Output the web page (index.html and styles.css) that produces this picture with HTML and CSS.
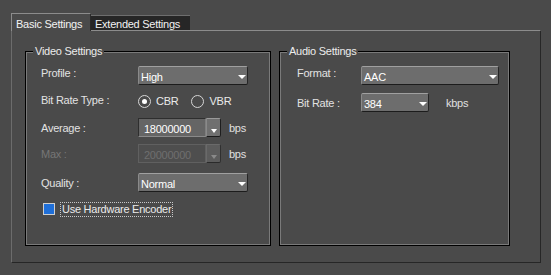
FILE: index.html
```html
<!DOCTYPE html>
<html lang="en">
<head>
    <meta charset="UTF-8">
    <title>Encoder Settings</title>
    <link rel="stylesheet" href="styles.css">
</head>
<body>

<div class="window">
    <div class="tabs">
        <div class="tab tab-active">Basic Settings</div>
        <div class="tab">Extended Settings</div>
    </div>

    <div class="panel">
        <fieldset class="group group-video">
            <legend>Video Settings</legend>
            <div class="rows">
                <div class="row">
                    <span class="label label-top">Profile :</span>
                    <div class="select select-profile"><span class="value">High</span><i class="arrow"></i></div>
                </div>

                <div class="row row-radio">
                    <span class="label">Bit Rate Type :</span>
                    <label class="radio"><i class="dot dot-on"></i>CBR</label>
                    <label class="radio"><i class="dot"></i>VBR</label>
                </div>

                <div class="row">
                    <span class="label label-mid">Average :</span>
                    <div class="combo">
                        <span class="edit">18000000</span>
                        <span class="drop"><i class="arrow"></i></span>
                    </div>
                    <span class="unit">bps</span>
                </div>

                <div class="row row-max">
                    <span class="label label-mid disabled">Max :</span>
                    <div class="combo combo-off">
                        <span class="edit">20000000</span>
                        <span class="drop"><i class="arrow"></i></span>
                    </div>
                    <span class="unit">bps</span>
                </div>

                <div class="row row-quality">
                    <span class="label label-mid">Quality :</span>
                    <div class="select select-profile"><span class="value">Normal</span><i class="arrow"></i></div>
                </div>

                <div class="row row-check">
                    <i class="check"></i>
                    <span class="focus">Use Hardware Encoder</span>
                </div>
            </div>
        </fieldset>

        <fieldset class="group group-audio">
            <legend>Audio Settings</legend>
            <div class="rows">
                <div class="row">
                    <span class="label label-top">Format :</span>
                    <div class="select select-format"><span class="value">AAC</span><i class="arrow"></i></div>
                </div>

                <div class="row row-bitrate">
                    <span class="label label-mid">Bit Rate :</span>
                    <div class="select select-bitrate"><span class="value">384</span><i class="arrow"></i></div>
                    <span class="unit unit-kbps">kbps</span>
                </div>
            </div>
        </fieldset>
    </div>
</div>

</body>
</html>
```

FILE: styles.css
```css
body {
    margin: 0;
    background-color: #4a4a4a;
    font-family: "Liberation Sans", Arial, sans-serif;
    font-size: 11px;
    line-height: 13px;
    letter-spacing: -0.25px;
    color: #e2e2e2;
}

.window {
    padding: 13px 11px 0;
}

/* tabs */
.tabs {
    display: flex;
    align-items: flex-end;
}

.tab {
    box-sizing: border-box;
    height: 15px;
    width: 99px;
    padding: 2px 0 0 4px;
    background-color: #262626;
    border-top: 1px solid #6e6e6e;
    color: #f2f2f2;
}

.tab-active {
    position: relative;
    z-index: 1;
    width: 80px;
    height: 18px;
    margin-bottom: -1px;
    padding: 4px 0 0 4px;
    background-color: #4a4a4a;
    border-top: 1px solid #8c8c8c;
    border-left: 1px solid #8c8c8c;
    border-right: 1px solid #2a2a2a;
}

.panel {
    box-sizing: border-box;
    width: 530px;
    height: 233px;
    display: flex;
    gap: 8px;
    padding: 14px 0 16px 13px;
    border-top: 1px solid #8c8c8c;
    border-left: 1px solid #6c6c6c;
    border-right: 1px solid #262626;
    border-bottom: 1px solid #262626;
}

/* group boxes */
.group {
    box-sizing: border-box;
    margin: 0;
    padding: 0;
    min-width: 0;
    border: 1px solid #000;
    box-shadow: inset 0 0 0 1px #7a7a7a;
}

.group legend {
    margin-left: 7px;
    padding: 0 2px;
    background-color: #4a4a4a;
    color: #ececec;
}

.group-video {
    width: 246px;
}

.group-audio {
    width: 231px;
}

.rows {
    display: flex;
    flex-direction: column;
    gap: 9px;
    padding: 8px 0 0 15px;
}

.group-audio .rows {
    gap: 8px;
    padding-left: 17px;
}

.row {
    display: flex;
    align-items: flex-start;
    height: 19px;
}

.row-radio {
    height: 15px;
}

.row-max {
    margin-top: -2px;
}

.row-quality,
.row-check {
    margin-top: 1px;
}

.row-check {
    height: 15px;
}

.label {
    flex: none;
    width: 97px;
}

.group-audio .label {
    width: 64px;
}

.label-top {
    margin-top: 1px;
}

.label-mid {
    margin-top: 4px;
}

.disabled {
    color: #767676;
}

/* drop-down lists */
.select {
    box-sizing: border-box;
    height: 19px;
    display: flex;
    align-items: flex-start;
    padding: 4px 1px 0 2px;
    background-color: #6d6d6d;
    border: 1px solid;
    border-color: #a0a0a0 #262626 #1c1c1c #8a8a8a;
    border-radius: 2px;
    color: #fff;
}

.select .value {
    flex: 1;
}

.select-profile {
    width: 110px;
}

.select-format {
    width: 138px;
}

.select-bitrate {
    width: 68px;
}

.arrow {
    width: 0;
    height: 0;
    margin-top: 4px;
    border-left: 4px solid transparent;
    border-right: 4px solid transparent;
    border-top: 4px solid #fff;
}

/* editable combo */
.combo {
    display: flex;
    height: 19px;
}

.edit {
    box-sizing: border-box;
    width: 68px;
    height: 19px;
    padding: 4px 0 0 5px;
    background-color: #656565;
    border: 1px solid;
    border-color: #2e2e2e #7e7e7e #8a8a8a #2e2e2e;
    color: #fff;
}

.drop {
    box-sizing: border-box;
    width: 15px;
    height: 19px;
    display: flex;
    justify-content: center;
    padding-top: 6px;
    background-color: #707070;
    border: 1px solid;
    border-color: #9a9a9a #1e1e1e #1a1a1a #8a8a8a;
    border-radius: 0 2px 2px 0;
}

.drop .arrow {
    border-left-width: 3.5px;
    border-right-width: 3.5px;
}

.combo-off .edit {
    background-color: #4e4e4e;
    border-color: #606060;
    color: #6e6e6e;
}

.combo-off .drop {
    background-color: #5c5c5c;
    border-color: #6a6a6a #303030 #2a2a2a #6a6a6a;
}

.combo-off .arrow {
    border-top-color: #8a8a8a;
}

.unit {
    margin: 4px 0 0 8px;
    color: #e0e0e0;
}

.unit-kbps {
    margin-left: 17px;
}

/* radio buttons */
.radio {
    display: flex;
    align-items: flex-start;
    margin-top: 1px;
    margin-right: 13px;
    color: #eaeaea;
}

.dot {
    box-sizing: border-box;
    width: 13px;
    height: 13px;
    margin-right: 5px;
    border: 1px solid #d6d6d6;
    border-radius: 50%;
    display: flex;
    align-items: center;
    justify-content: center;
}

.dot-on::after {
    content: "";
    width: 5px;
    height: 5px;
    border-radius: 50%;
    background-color: #fff;
}

/* checkbox */
.check {
    box-sizing: border-box;
    width: 12px;
    height: 12px;
    margin: 1px 5px 0 2px;
    background-color: #1f6fd8;
    border: 1px solid #cfcfcf;
}

.focus {
    padding: 0 1px;
    border: 1px dotted #c8c8c8;
    color: #ececec;
}
```
